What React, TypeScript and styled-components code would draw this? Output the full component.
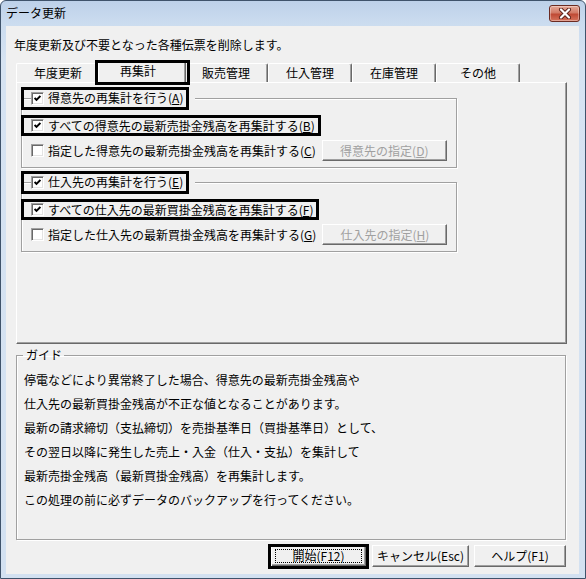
import React from 'react';
import styled, { createGlobalStyle, css } from 'styled-components';

const GlobalStyle = createGlobalStyle`
  html, body { margin: 0; padding: 0; background: #ffffff; }
  body {
    font-family: "Noto Sans CJK JP", "Noto Sans", sans-serif;
    font-size: 12px;
    color: #000;
  }
  * { box-sizing: border-box; }
`;

const mark = (t: number, r: number, b: number, l: number) => css`
  position: relative;
  &::after {
    content: '';
    position: absolute;
    top: ${-t}px;
    right: ${-r}px;
    bottom: ${-b}px;
    left: ${-l}px;
    border: 3px solid #000;
    pointer-events: none;
    z-index: 3;
  }
`;

const Window = styled.div`
  width: 586px;
  height: 579px;
  display: flex;
  flex-direction: column;
  background: linear-gradient(#bdd1e9 0px, #cbdcef 22px, #d6e3f2 60px, #d3e1f1 100%);
  border: 1px solid #3f536b;
  border-radius: 6px 6px 0 0;
  overflow: hidden;
`;

const TitleBar = styled.div`
  height: 25px;
  flex: none;
  display: flex;
  align-items: flex-start;
  justify-content: space-between;
  padding: 0 5px 0 5px;
`;

const Title = styled.div`
  line-height: 24px;
  font-size: 12px;
  color: #000;
`;

const CloseButton = styled.div`
  margin-top: 4px;
  width: 31px;
  height: 17px;
  border: 1px solid #6b2b22;
  border-radius: 3px;
  background: linear-gradient(#e6a999 0%, #d27a66 45%, #bf4a35 55%, #d6735c 100%);
  box-shadow: inset 0 0 0 1px rgba(255, 255, 255, 0.35);
  display: flex;
  align-items: center;
  justify-content: center;
`;

const Client = styled.div`
  flex: 1;
  margin: 0 6px 4px 5px;
  background: #f0f0f0;
  padding: 11px 12px 0 10px;
  display: flex;
  flex-direction: column;
`;

const Description = styled.div`
  line-height: 16px;
  margin: 0 0 8px -2px;
`;

const TabStrip = styled.div`
  height: 21px;
  display: flex;
  align-items: flex-end;
  position: relative;
  z-index: 2;
`;

const Tab = styled.div<{ $selected?: boolean; $marked?: boolean }>`
  width: 84px;
  height: 19px;
  display: flex;
  align-items: center;
  justify-content: center;
  line-height: 16px;
  background: #f0f0f0;
  border-top: 1px solid #ffffff;
  border-left: 1px solid #ffffff;
  border-right: 1px solid #696969;
  border-radius: 2px 2px 0 0;
  box-shadow: inset -1px 0 0 #a0a0a0;
  ${(p) =>
    p.$selected &&
    css`
      width: 88px;
      height: 23px;
      margin: 0 -2px -2px -2px;
      padding-bottom: 4px;
      padding-right: 8px;
      z-index: 2;
    `}
  ${(p) => p.$marked && mark(2, 5, 1, 4)}
`;

const Panel = styled.div`
  height: 262px;
  flex: none;
  border-top: 1px solid #ffffff;
  border-left: 1px solid #ffffff;
  border-right: 1px solid #696969;
  border-bottom: 1px solid #696969;
  box-shadow: inset -1px -1px 0 #a0a0a0;
  padding: 7px 0 0 4px;
  display: flex;
  flex-direction: column;
  gap: 6px;
`;

const Group = styled.fieldset<{ $width?: number }>`
  margin: 0;
  width: ${(p) => p.$width ?? 436}px;
  min-inline-size: 0;
  border: 1px solid #a0a0a0;
  box-shadow: 1px 1px 0 #ffffff, inset 1px 1px 0 #ffffff;
  padding: 9px 0 6px 9px;
  display: flex;
  flex-direction: column;
  gap: 4px;
`;

const Legend = styled.legend<{ $marked?: boolean }>`
  padding: 0 12px 0 0;
  background: #f0f0f0;
  height: 16px;
  display: flex;
  align-items: center;
  line-height: 16px;
  ${(p) => p.$marked && mark(3, -6, 4, 10)}
`;

const Row = styled.div`
  height: 21px;
  display: flex;
  align-items: center;
  gap: 6px;
`;

const CheckLabel = styled.label<{ $marked?: boolean }>`
  height: 21px;
  display: inline-flex;
  align-items: center;
  line-height: 16px;
  white-space: nowrap;
  ${(p) => p.$marked && mark(0, 6, 0, 10)}
`;

const Box = styled.span`
  width: 13px;
  height: 13px;
  flex: none;
  margin-right: 4px;
  background: #ffffff;
  border-top: 1px solid #a0a0a0;
  border-left: 1px solid #a0a0a0;
  border-right: 1px solid #ffffff;
  border-bottom: 1px solid #ffffff;
  box-shadow: inset 1px 1px 0 #696969, inset -1px -1px 0 #e3e3e3;
  display: inline-flex;
  align-items: center;
  justify-content: center;
`;

const Button = styled.button<{ $width: number; $height?: number; $default?: boolean; $marked?: boolean }>`
  width: ${(p) => p.$width}px;
  height: ${(p) => p.$height ?? 22}px;
  padding: 0;
  font-family: inherit;
  font-size: 12px;
  line-height: 16px;
  color: #000;
  background: #f0f0f0;
  border-top: 1px solid #ffffff;
  border-left: 1px solid #ffffff;
  border-right: 1px solid #696969;
  border-bottom: 1px solid #696969;
  box-shadow: inset -1px -1px 0 #a0a0a0;
  display: flex;
  align-items: center;
  justify-content: center;
  &:disabled {
    color: #a0a0a0;
  }
  ${(p) =>
    p.$default &&
    css`
      border: 1px solid #000;
      box-shadow: inset 1px 1px 0 #ffffff, inset -1px -1px 0 #696969, inset -2px -2px 0 #a0a0a0;
    `}
  ${(p) => p.$marked && mark(2, 3, 3, 3)}
`;

const FocusRect = styled.span`
  flex: 1;
  align-self: stretch;
  margin: 3px 4px;
  border: 1px dotted #000;
  display: flex;
  align-items: center;
  justify-content: center;
`;

const GuideGroup = styled.fieldset`
  margin: 3px 0 0 0;
  width: 550px;
  min-inline-size: 0;
  border: 1px solid #a0a0a0;
  box-shadow: 1px 1px 0 #ffffff, inset 1px 1px 0 #ffffff;
  padding: 5px 0 27px 7px;
`;

const GuideLegend = styled.legend`
  padding: 0 2px 0 3px;
  margin-left: -1px;
  line-height: 16px;
`;

const GuideLine = styled.p`
  margin: 0;
  line-height: 24px;
  white-space: nowrap;
`;

const ButtonRow = styled.div`
  display: flex;
  justify-content: flex-end;
  gap: 5px;
  margin-top: 5px;
  padding-right: 1px;
`;

const Check = () => (
  <svg width="7" height="7" viewBox="0 0 7 7">
    <polyline points="0.6,3 2.5,5 6.4,1" fill="none" stroke="#000" strokeWidth="1.9" />
  </svg>
);

const CheckBox: React.FC<{ checked?: boolean }> = ({ checked }) => <Box>{checked && <Check />}</Box>;

const Key: React.FC<{ k: string }> = ({ k }) => (
  <>
    (<u>{k}</u>)
  </>
);

const tabs = ['年度更新', '再集計', '販売管理', '仕入管理', '在庫管理', 'その他'];

const guide = [
  '停電などにより異常終了した場合、得意先の最新売掛金残高や',
  '仕入先の最新買掛金残高が不正な値となることがあります。',
  '最新の請求締切（支払締切）を売掛基準日（買掛基準日）として、',
  'その翌日以降に発生した売上・入金（仕入・支払）を集計して',
  '最新売掛金残高（最新買掛金残高）を再集計します。',
  'この処理の前に必ずデータのバックアップを行ってください。',
];

type GroupDef = {
  head: string;
  headKey: string;
  all: string;
  allKey: string;
  some: string;
  someKey: string;
  btn: string;
  btnKey: string;
};

const groups: GroupDef[] = [
  {
    head: '得意先の再集計を行う',
    headKey: 'A',
    all: 'すべての得意先の最新売掛金残高を再集計する',
    allKey: 'B',
    some: '指定した得意先の最新売掛金残高を再集計する',
    someKey: 'C',
    btn: '得意先の指定',
    btnKey: 'D',
  },
  {
    head: '仕入先の再集計を行う',
    headKey: 'E',
    all: 'すべての仕入先の最新買掛金残高を再集計する',
    allKey: 'F',
    some: '指定した仕入先の最新買掛金残高を再集計する',
    someKey: 'G',
    btn: '仕入先の指定',
    btnKey: 'H',
  },
];

const CloseIcon = () => (
  <svg width="14" height="11" viewBox="0 0 14 11">
    <path d="M3 1.5 L11 9.5 M11 1.5 L3 9.5" stroke="#5a2018" strokeWidth="4" strokeLinecap="round" />
    <path d="M3 1.5 L11 9.5 M11 1.5 L3 9.5" stroke="#ffffff" strokeWidth="2.2" strokeLinecap="round" />
  </svg>
);

export default function App() {
  return (
    <>
      <GlobalStyle />
      <Window>
        <TitleBar>
          <Title>データ更新</Title>
          <CloseButton>
            <CloseIcon />
          </CloseButton>
        </TitleBar>
        <Client>
          <Description>年度更新及び不要となった各種伝票を削除します。</Description>
          <TabStrip>
            {tabs.map((t) => (
              <Tab key={t} $selected={t === '再集計'} $marked={t === '再集計'}>
                {t}
              </Tab>
            ))}
          </TabStrip>
          <Panel>
            {groups.map((g) => (
              <Group key={g.head}>
                <Legend $marked>
                  <CheckBox checked />
                  <span>
                    {g.head}
                    <Key k={g.headKey} />
                  </span>
                </Legend>
                <Row>
                  <CheckLabel $marked>
                    <CheckBox checked />
                    <span>
                      {g.all}
                      <Key k={g.allKey} />
                    </span>
                  </CheckLabel>
                </Row>
                <Row>
                  <CheckLabel>
                    <CheckBox />
                    <span>
                      {g.some}
                      <Key k={g.someKey} />
                    </span>
                  </CheckLabel>
                  <Button $width={125} $height={21} disabled>
                    {g.btn}
                    <Key k={g.btnKey} />
                  </Button>
                </Row>
              </Group>
            ))}
          </Panel>
          <GuideGroup>
            <GuideLegend>ガイド</GuideLegend>
            {guide.map((l) => (
              <GuideLine key={l}>{l}</GuideLine>
            ))}
          </GuideGroup>
          <ButtonRow>
            <Button $width={97} $default $marked>
              <FocusRect>開始(F12)</FocusRect>
            </Button>
            <Button $width={97}>キャンセル(Esc)</Button>
            <Button $width={92}>ヘルプ(F1)</Button>
          </ButtonRow>
        </Client>
      </Window>
    </>
  );
}
